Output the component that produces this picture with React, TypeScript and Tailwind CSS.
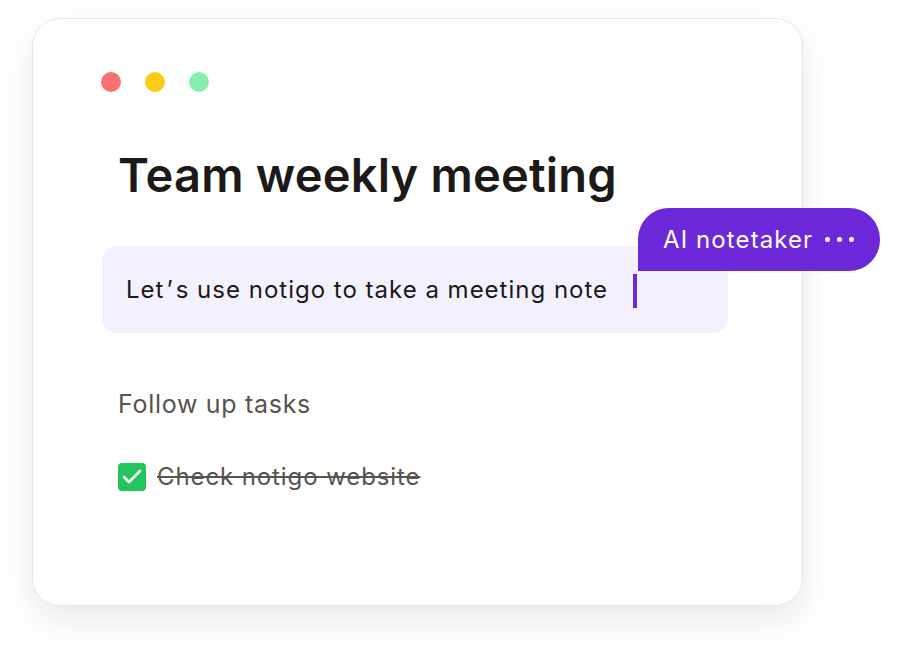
import { Check } from 'lucide-react';

const font = { fontFamily: 'Inter, "Noto Sans", sans-serif' };

function TrafficLights() {
  return (
    <div className="-ml-px flex items-center gap-[24px]">
      <span className="w-5 h-5 rounded-full bg-[#f87171]" />
      <span className="w-5 h-5 rounded-full bg-[#facc15]" />
      <span className="w-5 h-5 rounded-full bg-[#86efac]" />
    </div>
  );
}

export default function App() {
  return (
    <div className="w-[897px] h-[650px] bg-white pt-[18px] pl-[32px] overflow-hidden" style={font}>
      <div className="relative w-[771px] h-[588px] rounded-[28px] bg-white border border-[#e6e6e6] shadow-[0_14px_36px_rgba(0,0,0,0.09)]">
        <div className="pt-[53px] pl-[69px]">
          <TrafficLights />

          {/* Title */}
          <h1 className="mt-[59px] ml-[16px] text-[47px] leading-[48px] font-semibold text-[#1c1917] tracking-[0.2px]">
            Team weekly meeting
          </h1>

          {/* Highlighted block */}
          <div className="mt-[47px] w-[626px] h-[87px] rounded-[14px] bg-[#f4f1fe] flex items-center pl-[24px]">
            <span className="text-[24px] text-[#1c1917] leading-none tracking-[1px]">
              Let<span className="mx-[2px]">’</span>s use notigo to take a meeting note
            </span>
            <span className="ml-[25px] mt-[2px] w-[4px] h-[34px] bg-[#6d28d9]" />
          </div>

          {/* Tasks */}
          <div className="mt-[59px] ml-[16px] text-[25px] leading-none text-[#57534e] tracking-[0.7px]">
            Follow up tasks
          </div>
          <div className="mt-[46px] ml-[16px] flex items-center gap-[11px]">
            <span className="w-[28px] h-[28px] rounded-[4px] bg-[#22c55e] flex items-center justify-center">
              <Check className="w-[24px] h-[24px] text-white" strokeWidth={2.6} />
            </span>
            <span className="text-[24px] leading-none text-[#57534e] tracking-[0.9px] line-through decoration-[#57534e] decoration-2">
              Check notigo website
            </span>
          </div>
        </div>

        {/* AI notetaker bubble */}
        <div className="absolute left-[605px] top-[189px] h-[63px] w-[242px] rounded-[31px] rounded-bl-none bg-[#6d28d9] flex items-center pl-[25px]">
          <span className="text-[24px] leading-none text-white tracking-[1.1px]">AI notetaker</span>
          <span className="ml-[12px] flex items-center gap-[7px]">
            <span className="w-[5px] h-[5px] rounded-full bg-white" />
            <span className="w-[5px] h-[5px] rounded-full bg-white" />
            <span className="w-[5px] h-[5px] rounded-full bg-white" />
          </span>
        </div>
      </div>
    </div>
  );
}
